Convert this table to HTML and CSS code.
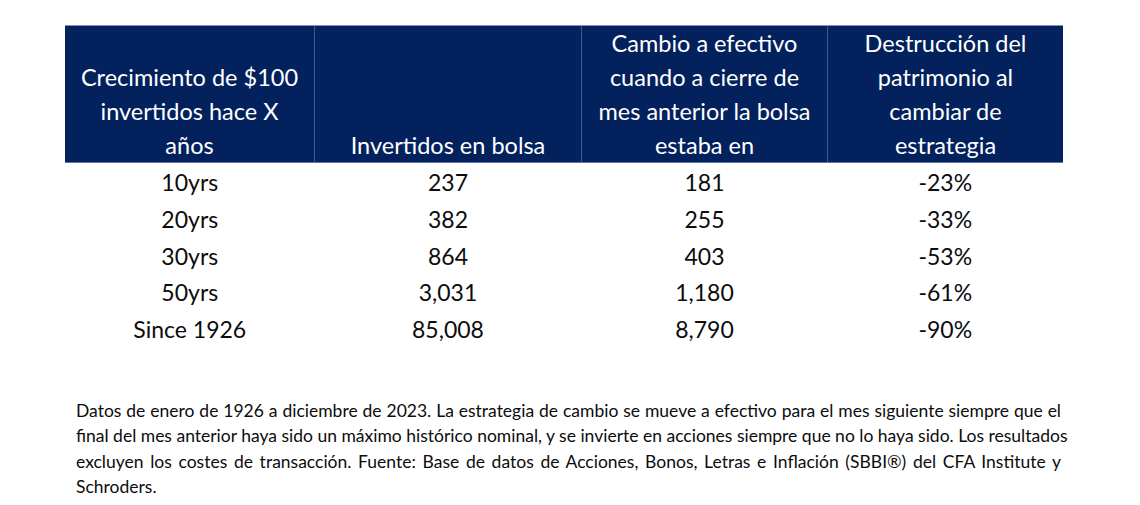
FILE: index.html
```html
<!DOCTYPE html>
<html lang="es">
<head>
<meta charset="utf-8">
<link rel="stylesheet" href="styles.css">
</head>
<body>
<div class="page">
  <table class="data">
    <thead>
      <tr>
        <th class="c1">Crecimiento de $100<br>invertidos hace X<br>años</th>
        <th class="c2">Invertidos en bolsa</th>
        <th class="c3">Cambio a efectivo<br>cuando a cierre de<br>mes anterior la bolsa<br>estaba en</th>
        <th class="c4">Destrucción del<br>patrimonio al<br>cambiar de<br>estrategia</th>
      </tr>
    </thead>
    <tbody>
      <tr><td>10yrs</td><td>237</td><td>181</td><td>-23%</td></tr>
      <tr><td>20yrs</td><td>382</td><td>255</td><td>-33%</td></tr>
      <tr><td>30yrs</td><td>864</td><td>403</td><td>-53%</td></tr>
      <tr><td>50yrs</td><td>3,031</td><td>1,180</td><td>-61%</td></tr>
      <tr><td>Since 1926</td><td>85,008</td><td>8,790</td><td>-90%</td></tr>
    </tbody>
  </table>
  <div class="note">
    <span class="ln">Datos de enero de 1926 a diciembre de 2023. La estrategia de cambio se mueve a efectivo para el mes siguiente siempre que el</span>
    <span class="ln">final del mes anterior haya sido un máximo histórico nominal, y se invierte en acciones siempre que no lo haya sido. Los resultados</span>
    <span class="ln">excluyen los costes de transacción. Fuente: Base de datos de Acciones, Bonos, Letras e Inflación (SBBI®) del CFA Institute y</span>
    <span class="ln last">Schroders.</span>
  </div>
</div>
</body>
</html>
```

FILE: styles.css
```css
html, body {
  margin: 0;
  padding: 0;
  background: #ffffff;
}

.page {
  width: 1140px;
  height: 505px;
  padding-top: 25px;
  box-sizing: border-box;
  font-family: Lato, "Open Sans", "Liberation Sans", sans-serif;
  color: #0c0c0c;
}

.data {
  margin-left: 65px;
  width: 995px;
  border-collapse: collapse;
  table-layout: fixed;
}

.data th {
  background: #03215d;
  color: #ffffff;
  font-weight: normal;
  font-size: 23.5px;
  line-height: 34px;
  height: 135px;
  padding: 0;
  vertical-align: bottom;
  text-align: center;
  border-left: 1px solid #3d5b91;
  border-top: 1px solid #7e93b8;
  border-bottom: 1px solid #5b76a8;
}

.data th:first-child {
  border-left: none;
}

.data .c1 { width: 249px; }
.data .c2 { width: 266px; }
.data .c3 { width: 245px; }
.data .c4 { width: 235px; }

.data td {
  font-size: 23px;
  line-height: 36.75px;
  height: 36.75px;
  padding: 0;
  text-align: center;
  color: #0c0c0c;
}

.data tbody tr:first-child td {
  padding-top: 1px;
}

.note {
  margin-top: 50px;
  margin-left: 76px;
  width: 985px;
  font-size: 17.5px;
  line-height: 25.5px;
  color: #0c0c0c;
}

.note .ln {
  display: block;
  text-align: justify;
  text-align-last: justify;
  white-space: nowrap;
}

.note .ln.last {
  text-align-last: left;
}
```
